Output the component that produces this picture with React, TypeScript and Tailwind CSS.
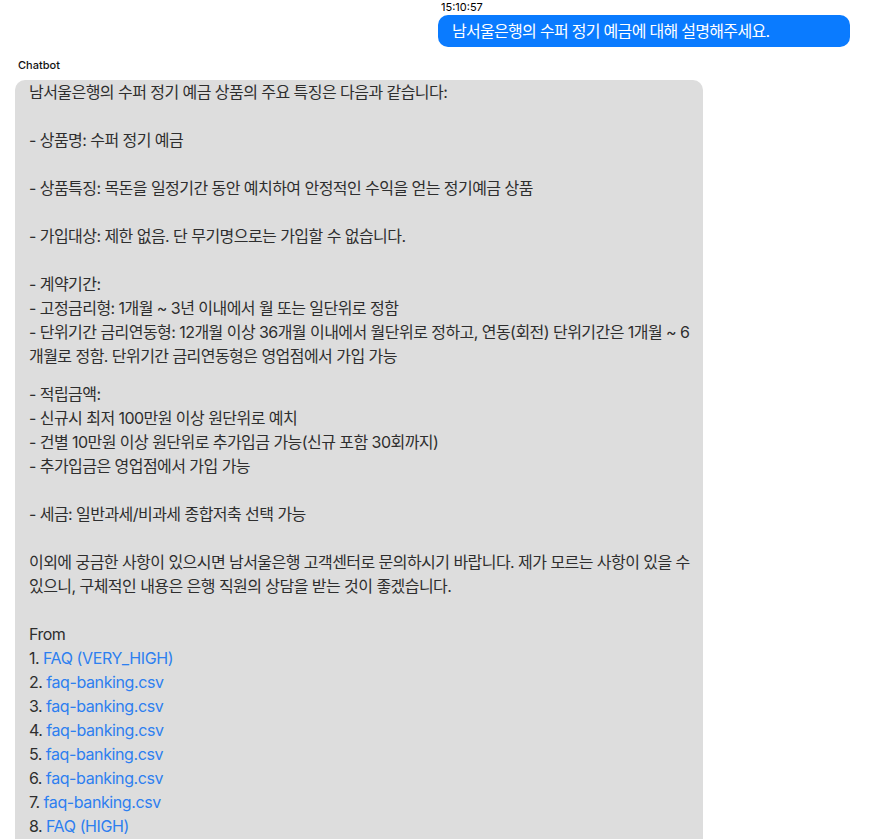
import React from "react";

const font = { fontFamily: '"Inter", "Noto Sans CJK KR", sans-serif' };

type Line = { t?: string; gap?: number; link?: [string, string] };

const lines: Line[] = [
  { t: "남서울은행의 수퍼 정기 예금 상품의 주요 특징은 다음과 같습니다:" },
  { gap: 24 },
  { t: "- 상품명: 수퍼 정기 예금" },
  { gap: 24 },
  { t: "- 상품특징: 목돈을 일정기간 동안 예치하여 안정적인 수익을 얻는 정기예금 상품" },
  { gap: 24 },
  { t: "- 가입대상: 제한 없음. 단 무기명으로는 가입할 수 없습니다." },
  { gap: 24 },
  { t: "- 계약기간:" },
  { t: "- 고정금리형: 1개월 ~ 3년 이내에서 월 또는 일단위로 정함" },
  { t: "- 단위기간 금리연동형: 12개월 이상 36개월 이내에서 월단위로 정하고, 연동(회전) 단위기간은 1개월 ~ 6" },
  { t: "개월로 정함. 단위기간 금리연동형은 영업점에서 가입 가능" },
  { gap: 14 },
  { t: "- 적립금액:" },
  { t: "- 신규시 최저 100만원 이상 원단위로 예치" },
  { t: "- 건별 10만원 이상 원단위로 추가입금 가능(신규 포함 30회까지)" },
  { t: "- 추가입금은 영업점에서 가입 가능" },
  { gap: 24 },
  { t: "- 세금: 일반과세/비과세 종합저축 선택 가능" },
  { gap: 24 },
  { t: "이외에 궁금한 사항이 있으시면 남서울은행 고객센터로 문의하시기 바랍니다. 제가 모르는 사항이 있을 수" },
  { t: "있으니, 구체적인 내용은 은행 직원의 상담을 받는 것이 좋겠습니다." },
  { gap: 24 },
  { t: "From" },
  { link: ["1.", "FAQ (VERY_HIGH)"] },
  { link: ["2.", "faq-banking.csv"] },
  { link: ["3.", "faq-banking.csv"] },
  { link: ["4.", "faq-banking.csv"] },
  { link: ["5.", "faq-banking.csv"] },
  { link: ["6.", "faq-banking.csv"] },
  { link: ["7.", "faq-banking.csv"] },
  { link: ["8.", "FAQ (HIGH)"] },
];

export default function App() {
  return (
    <div className="w-[871px] h-[839px] overflow-hidden bg-white" style={font}>
      <div className="flex flex-col items-end pr-[21px]">
        <div className="w-[412px] text-[11px] leading-[14px] text-black pl-[3px]">15:10:57</div>
        <div className="w-[412px] h-[32px] mt-[1px] rounded-[10px] bg-[#0a7bff] text-white text-[16px] leading-[32px] pl-[14px] whitespace-nowrap tracking-[-0.7px]">
          남서울은행의 수퍼 정기 예금에 대해 설명해주세요.
        </div>
      </div>
      <div className="pl-[18px] mt-[11px] text-[11px] leading-[14px] font-medium text-[#111]">Chatbot</div>
      <div className="ml-[15px] mt-[8px] w-[688px] rounded-[10px] bg-[#dddddd] pl-[14px] pb-10 text-[16px] leading-[24px] text-[#2e2e2e] tracking-[-0.55px]">
        {lines.map((l, i) => {
          if (l.gap) return <div key={i} style={{ height: l.gap }} />;
          if (l.link)
            return (
              <div key={i} className="whitespace-nowrap">
                {l.link[0]} <span className="text-[#2d7ff0] tracking-[-0.4px]">{l.link[1]}</span>
              </div>
            );
          return (
            <div key={i} className="whitespace-nowrap">
              {l.t}
            </div>
          );
        })}
      </div>
    </div>
  );
}
